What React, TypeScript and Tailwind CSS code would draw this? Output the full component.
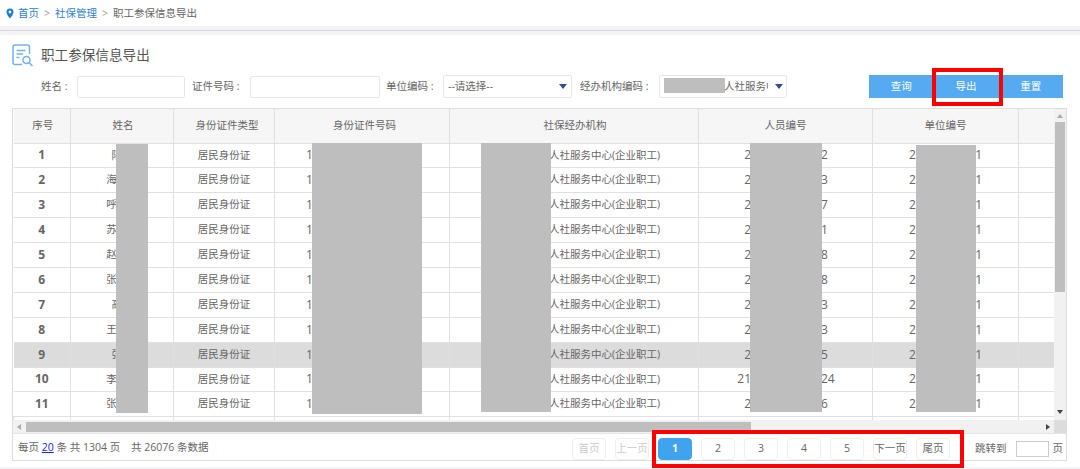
const font = "font-['Open_Sans','Noto_Sans_CJK_SC',sans-serif]";
const rows = [
  ["1", "陆某", "1", "2", "2", "2", "1"],
  ["2", "海某某", "1", "2", "3", "2", "1"],
  ["3", "呼某某", "1", "2", "7", "2", "1"],
  ["4", "苏某某", "1", "2", "1", "2", "1"],
  ["5", "赵某某", "1", "2", "8", "2", "1"],
  ["6", "张某某", "1", "2", "8", "2", "1"],
  ["7", "高某", "1", "2", "3", "2", "1"],
  ["8", "王某某", "1", "2", "3", "2", "1"],
  ["9", "张某", "1", "2", "5", "2", "1"],
  ["10", "李某某", "1", "21", "24", "2", "1"],
  ["11", "张某某", "1", "2", "6", "2", "1"],
];
const cols = [57, 103, 101, 175, 249, 174, 146, 37];
const headers = [
  { t: "序号", c: "pl-[2px]" },
  { t: "姓名", c: "pl-[2px]" },
  { t: "身份证件类型", c: "pl-[6px]" },
  { t: "身份证件号码", c: "pl-[5px]" },
  { t: "社保经办机构", c: "pl-[2px]" },
  { t: "人员编号", c: "" },
  { t: "单位编号", c: "" },
  { t: "", c: "" },
];
const pages = ["1", "2", "3", "4", "5", "下一页", "尾页"];

function Redact({ c }: { c: string }) {
  return <div className={`absolute bg-[#bebebe] ${c}`} />;
}

function Caret() {
  return <span className="ml-auto h-0 w-0 shrink-0 border-x-[4px] border-t-[5px] border-x-transparent border-t-[#2f4f8f]" />;
}

export default function App() {
  return (
    <div className={`${font} relative h-[469px] w-[1080px] overflow-hidden bg-white text-[10.5px] text-[#666]`}>
      <div className="flex h-[26px] items-center gap-[5px] pl-[6px] pt-[1px]">
        <svg className="mr-[-1px]" width="8" height="11" viewBox="0 0 8 11"><path d="M4 0.5a3.5 3.5 0 0 1 3.5 3.5C7.5 6.5 4 10.5 4 10.500S.5 6.500.5 4A3.500 3.500 0 0 1 4 .5z" fill="#1a78d6" /><circle cx="4" cy="4" r="1.400" fill="#fff" /></svg>
        <span className="text-[#2f7fd6]">首页</span>
        <span className="text-[#999]">&gt;</span>
        <span className="text-[#2f7fd6]">社保管理</span>
        <span className="text-[#999]">&gt;</span>
        <span>职工参保信息导出</span>
      </div>
      <div className="h-[9px] bg-[#f4f4f7] pt-[4px]"><div className="h-px bg-[#d8d8e2]" /></div>

      <div className="flex h-[40px] items-center gap-[7px] pl-[12px]">
        <svg width="22" height="23" viewBox="0 0 22 23" fill="none" stroke="#6fb3f0" strokeWidth="1.500">
          <path d="M17.500 10V3a2 2 0 0 0-2-2H3a2 2 0 0 0-2 2v15.500a2 2 0 0 0 2 2h7" />
          <path d="M4.500 6.500h9M4.500 10h6.500M4.500 13.500h3" />
          <circle cx="14.500" cy="16" r="3.500" />
          <path d="M17 18.500l3.500 3.500" />
        </svg>
        <span className="text-[13.6px] text-[#555]">职工参保信息导出</span>
      </div>

      <div className="relative flex h-[23px] items-center pl-[41px]">
        <span className="w-[36px] whitespace-pre">姓名 :</span>
        <div className="h-[22px] w-[108px] rounded-[2px] border border-[#e6e6e6]" />
        <span className="ml-[7px] w-[58px] whitespace-pre">证件号码 :</span>
        <div className="h-[22px] w-[130px] rounded-[2px] border border-[#e6e6e6]" />
        <span className="ml-[6px] w-[57px] whitespace-pre">单位编码 :</span>
        <div className="flex h-[23px] w-[129px] items-center rounded-[2px] border border-[#e6e6e6] pl-[4px] pr-[4px]">--请选择--<Caret /></div>
        <span className="ml-[8px] w-[79px] whitespace-pre">经办机构编码 :</span>
        <div className="flex h-[23px] w-[128px] items-center rounded-[2px] border border-[#e6e6e6] pr-[3px]">
          <span className="w-[108px] shrink-0 overflow-hidden whitespace-nowrap pl-[64px]">人社服务中心</span><Caret />
        </div>
        <div className="ml-[82px] flex h-[23px] w-[194px] text-white">
          {["查询", "导出", "重置"].map((t) => (
            <button key={t} className="flex-1 bg-[#55aaf0] text-[10.5px]">{t}</button>
          ))}
        </div>
        <Redact c="left-[664px] top-[3px] h-[15px] w-[61px]" />
      </div>

      <div className="relative mx-[12px] mt-[10px] h-[353px] w-[1055px] overflow-hidden border border-[#dedede]">
        <table className="w-[1042px] table-fixed border-collapse">
          <colgroup>
            {cols.map((w, i) => <col key={i} style={{ width: w }} />)}
          </colgroup>
          <thead>
            <tr className="h-[34px] bg-[#f6f6f6]">
              {headers.map((h, i) => <th key={i} className={`border border-t-0 border-[#e0e0e0] font-normal first:border-l-0 ${h.c}`}>{h.t}</th>)}
            </tr>
          </thead>
          <tbody>
            {rows.map((r) => (
              <tr key={r[0]} className={`h-[24.9px] ${r[0] === "9" ? "bg-[#dcdcdc]" : ""}`}>
                <td className="border border-l-0 border-[#e0e0e0] text-center text-[12px] font-bold">{r[0]}</td>
                <td className="border border-[#e0e0e0] text-center">{r[1]}</td>
                <td className="border border-[#e0e0e0] text-center">居民身份证</td>
                <td className="border border-[#e0e0e0] pl-[31px] text-[12px]">{r[2]}</td>
                <td className="border border-[#e0e0e0] pl-[99px]">人社服务中心(企业职工)</td>
                <td className="border border-[#e0e0e0] text-[12px]"><span className="flex"><span className="w-[52px] text-right">{r[3]}</span><span className="ml-[70px]">{r[4]}</span></span></td>
                <td className="border border-[#e0e0e0] pl-[36px] text-[12px]"><span className="flex w-[73px] justify-between"><span>{r[5]}</span><span>{r[6]}</span></span></td>
                <td className="border border-[#e0e0e0]" />
              </tr>
            ))}
            <tr className="h-[5px]">{cols.map((_, i) => <td key={i} className="border-x border-[#e0e0e0]" />)}</tr>
          </tbody>
        </table>

        <Redact c="left-[103px] top-[35px] h-[269px] w-[32px]" />
        <Redact c="left-[299px] top-[34px] h-[271px] w-[110px]" />
        <Redact c="left-[468px] top-[34px] h-[269px] w-[70px]" />
        <Redact c="left-[737px] top-[34px] h-[269px] w-[72px]" />
        <Redact c="left-[903px] top-[36px] h-[267px] w-[60px]" />

        <div className="absolute right-0 top-0 flex h-[311px] w-[12px] flex-col items-center bg-[#f1f1f1]">
          <span className="mt-[5px] h-0 w-0 border-x-[3px] border-b-[4px] border-x-transparent border-b-[#aaa]" />
          <div className="mt-[4px] h-[170px] w-[10px] bg-[#bebebe]" />
          <span className="mb-[6px] mt-auto h-0 w-0 border-x-[3px] border-t-[4px] border-x-transparent border-t-[#444]" />
        </div>
        <div className="absolute left-0 top-[311px] flex h-[13px] w-[1041px] items-center bg-[#f1f1f1]">
          <span className="ml-[4px] h-0 w-0 border-y-[3px] border-r-[4px] border-y-transparent border-r-[#aaa]" />
          <div className="ml-[5px] h-[10px] w-[725px] bg-[#bebebe]" />
          <span className="ml-auto mr-[4px] h-0 w-0 border-y-[3px] border-l-[4px] border-y-transparent border-l-[#444]" />
        </div>
        <div className="absolute right-0 top-[311px] h-[13px] w-[12px] bg-[#dcdcdc]" />
        <div className="absolute bottom-0 left-0 flex h-[27px] w-full items-center border-t border-[#e6e6e6] bg-white pl-[5px] pt-[2px]">
          <span className="whitespace-pre">每页 <span className="text-[#2222ee] underline">20</span> 条 共 1304 页{"    "}共 26076 条数据</span>
          <div className="absolute left-[559px] top-[4px] flex gap-[9px]">
            <span className="flex h-[22px] w-[34px] items-center justify-center whitespace-nowrap rounded-[4px] border border-[#eee] text-[#ccc]">首页</span>
            <span className="flex h-[22px] w-[34px] items-center justify-center whitespace-nowrap rounded-[4px] border border-[#eee] text-[#ccc]">上一页</span>
            {pages.map((p, i) => (
              <span key={p} className={`flex h-[22px] w-[34px] items-center justify-center whitespace-nowrap rounded-[4px] border ${i === 0 ? "border-[#3fa3ef] bg-[#3fa3ef] font-bold text-white" : "border-[#eee]"}`}>{p}</span>
            ))}
          </div>
          <span className="absolute left-[962px] top-[4px] flex h-[21px] items-center whitespace-nowrap">跳转到<span className="ml-[9px] mr-[4px] h-[16px] w-[33px] border border-[#ccc]" />页</span>
        </div>
      </div>

      <div className="absolute left-0 top-[467px] h-[2px] w-full bg-[#f3f3f6]" />
      <div className="absolute left-[932px] top-[68px] h-[38px] w-[71px] border-[4px] border-[#ff0000]" />
      <div className="absolute left-[652px] top-[430px] h-[38px] w-[312px] border-[4px] border-[#ff0000]" />
    </div>
  );
}
